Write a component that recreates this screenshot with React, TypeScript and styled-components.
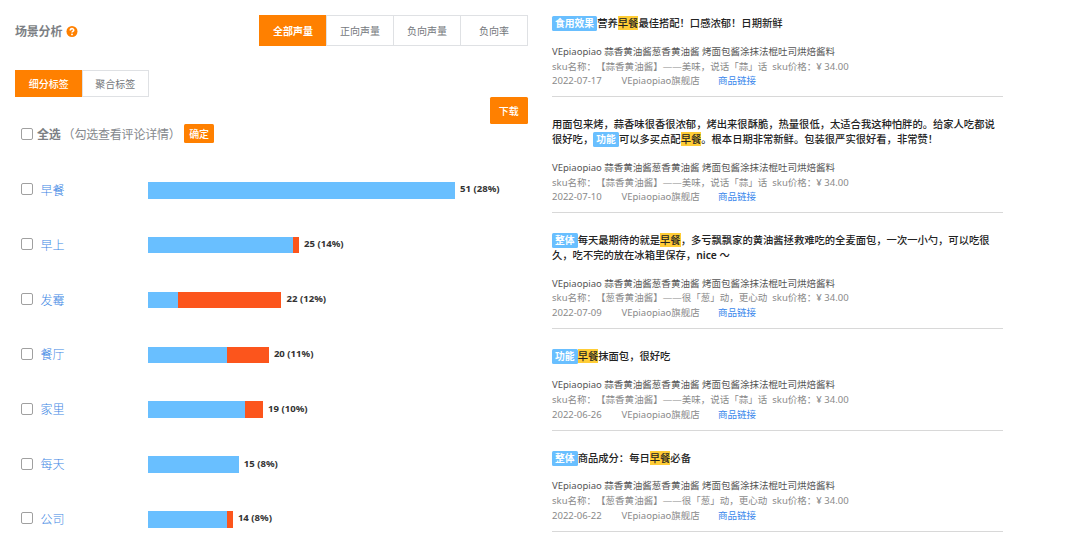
import React from 'react';
import styled, { createGlobalStyle } from 'styled-components';

const Global = createGlobalStyle`
  * { box-sizing: border-box; }
  body {
    margin: 0;
    background: #fff;
    overflow: hidden;
    font-family: "Noto Sans", "Noto Sans CJK SC", sans-serif;
    text-spacing-trim: space-all;
  }
`;

const Page = styled.main`
  display: flex;
  width: 1080px;
  height: 537px;
  overflow: hidden;
`;

const Analysis = styled.section`
  width: 528px;
  flex: none;
  padding: 15px 0 0 15px;
`;

const TopBar = styled.header`
  display: flex;
  justify-content: space-between;
  align-items: center;
  height: 31px;
`;

const Title = styled.h1`
  display: flex;
  align-items: center;
  gap: 4px;
  margin: 2px 0 0;
  font-size: 12px;
  line-height: 16px;
  letter-spacing: -0.2px;
  font-weight: 700;
  color: #7c7f84;
`;

const Group = styled.div`
  display: flex;
`;

const Tab = styled.button<{ $active?: boolean; $h: number }>`
  width: ${p => (p.$h > 28 ? 68 : 67.5)}px;
  height: ${p => p.$h}px;
  margin: 0 0 0 -1px;
  padding: 0;
  border: 1px solid ${p => (p.$active ? '#ff8000' : '#dfe1e4')};
  background: ${p => (p.$active ? '#ff8000' : '#fff')};
  color: ${p => (p.$active ? '#fff' : '#75787d')};
  font: ${p => (p.$active ? (p.$h > 28 ? 700 : 500) : 400)} 10px/14px "Noto Sans", "Noto Sans CJK SC", sans-serif;
  &:first-child { margin-left: 0; }
`;

const SubBar = styled.div`
  display: flex;
  justify-content: space-between;
  margin-top: 24px;
  height: 54px;
`;

const Button = styled.button<{ $w: number; $h: number }>`
  width: ${p => p.$w}px;
  height: ${p => p.$h}px;
  padding: 0;
  border: 0;
  border-radius: 1.5px;
  background: #ff8000;
  color: #fff;
  font: 500 10px/14px "Noto Sans", "Noto Sans CJK SC", sans-serif;
`;

const Download = styled(Button)`
  align-self: flex-end;
`;

const SelectAll = styled.div`
  display: flex;
  align-items: center;
  height: 19px;
  padding-left: 6px;
  font-size: 12px;
  letter-spacing: -0.2px;
  color: #85888d;
`;

const Strong = styled.span`
  margin-left: 4px;
  font-weight: 700;
  color: #7c7f84;
`;

const Hint = styled.span`
  margin: 0 3.5px 0 2px;
  letter-spacing: -0.2px;
`;

const Check = styled.input`
  appearance: none;
  flex: none;
  width: 12px;
  height: 12px;
  margin: 0;
  border: 1px solid #a0a0a0;
  border-radius: 2px;
  background: #fff;
`;

const Rows = styled.div`
  display: flex;
  flex-direction: column;
  margin-top: 19.9px;
`;

const Row = styled.div`
  display: flex;
  align-items: center;
  height: 54.85px;
  padding-left: 6px;

  ${Check} {
    margin-bottom: 2px;
  }
`;

const RowLabel = styled.a`
  width: 107px;
  margin-left: 7.5px;
  padding-top: 1px;
  font-size: 12px;
  line-height: 16px;
  font-weight: 300;
  color: #3c86e4;
`;

const Bar = styled.div<{ $w: number; $neg?: boolean }>`
  flex: none;
  width: ${p => p.$w}px;
  height: 16.5px;
  background: ${p => (p.$neg ? '#fc551c' : '#69bfff')};
`;

const Value = styled.span`
  margin: -2px 0 0 5px;
  font: 700 9.6px/14px "Noto Sans", sans-serif;
  color: #333;
`;

const Reviews = styled.section`
  width: 451px;
  margin-left: 24px;
  flex: none;
`;

const Review = styled.article`
  padding: 20.2px 0 6.9px;
  border-bottom: 1px solid #d8d8d8;
  white-space: nowrap;
  &:first-child { padding-top: 16px; }
`;

const Line = styled.div`
  height: 14.5px;
  line-height: 14.5px;
  font-size: 10.3px;
  font-weight: 500;
  color: #222;
`;

const Latin = styled.span`
  font-weight: 600;
`;

const Tag = styled.span`
  display: inline-block;
  height: 15px;
  padding: 0 3.1px;
  border-radius: 1.5px;
  background: #69bfff;
  color: #fff;
  font-size: 9.75px;
  font-weight: 700;
  line-height: 15px;
  vertical-align: top;
`;

const Mark = styled.mark`
  display: inline-block;
  height: 14px;
  line-height: 14px;
  background: #ffcd36;
  color: #222;
  vertical-align: top;
`;

const Meta = styled.div`
  margin-top: 14.2px;
  font-size: 9.52px;
  line-height: 14.9px;
  color: #8a8a8a;
`;

const Product = styled.div`
  height: 14.9px;
  color: #555;
`;

const Sku = styled.div`
  height: 14.9px;
  white-space: pre;
`;

const Info = styled.div`
  display: flex;
  height: 14.9px;
`;

const DateCell = styled.span`
  width: 69.5px;
`;

const Shop = styled.span`
  width: 96.5px;
`;

const Link = styled.a`
  color: #3a87ec;
`;

const rows = [
  { name: '早餐', pos: 307.5, neg: 0, text: '51 (28%)' },
  { name: '早上', pos: 145.5, neg: 6, text: '25 (14%)' },
  { name: '发霉', pos: 30.2, neg: 103.8, text: '22 (12%)' },
  { name: '餐厅', pos: 79.7, neg: 41.7, text: '20 (11%)' },
  { name: '家里', pos: 97, neg: 18.5, text: '19 (10%)' },
  { name: '每天', pos: 91.2, neg: 0, text: '15 (8%)' },
  { name: '公司', pos: 79.7, neg: 5.7, text: '14 (8%)' },
];

const garlic = '【蒜香黄油酱】——美味，说话「蒜」话';
const onion = '【葱香黄油酱】——很「葱」动，更心动';

const reviews = [
  {
    lines: [<><Tag>食用效果</Tag>营养<Mark>早餐</Mark>最佳搭配！口感浓郁！日期新鲜</>],
    sku: garlic,
    date: '2022-07-17',
  },
  {
    lines: [
      <>用面包来烤，蒜香味很香很浓郁，烤出来很酥脆，热量很低，太适合我这种怕胖的。给家人吃都说</>,
      <>很好吃，<Tag>功能</Tag>可以多买点配<Mark>早餐</Mark>。根本日期非常新鲜。包装很严实很好看，非常赞！</>,
    ],
    sku: garlic,
    date: '2022-07-10',
  },
  {
    lines: [
      <><Tag>整体</Tag>每天最期待的就是<Mark>早餐</Mark>，多亏飘飘家的黄油酱拯救难吃的全麦面包，一次一小勺，可以吃很</>,
      <>久，吃不完的放在冰箱里保存，<Latin>nice</Latin> ～</>,
    ],
    sku: onion,
    date: '2022-07-09',
  },
  {
    lines: [<><Tag>功能</Tag><Mark>早餐</Mark>抹面包，很好吃</>],
    sku: garlic,
    date: '2022-06-26',
  },
  {
    lines: [<><Tag>整体</Tag>商品成分：每日<Mark>早餐</Mark>必备</>],
    sku: onion,
    date: '2022-06-22',
  },
];

const HelpIcon = () => (
  <svg width="12" height="12" viewBox="0 0 12 12">
    <circle cx="6" cy="5.5" r="5.5" fill="#ff8000" />
    <path d="M4.3 4.4C4.3 2 7.7 2.1 7.7 4.2C7.7 5.4 6 5.4 6 6.6" fill="none" stroke="#fff" strokeWidth="1.6" />
    <circle cx="6" cy="8.4" r=".95" fill="#fff" />
  </svg>
);

export default function App() {
  return (
    <Page>
      <Global />
      <Analysis>
        <TopBar>
          <Title>场景分析<HelpIcon /></Title>
          <Group>
            <Tab $h={31} $active>全部声量</Tab>
            <Tab $h={31}>正向声量</Tab>
            <Tab $h={31}>负向声量</Tab>
            <Tab $h={31}>负向率</Tab>
          </Group>
        </TopBar>
        <SubBar>
          <Group>
            <Tab $h={27} $active>细分标签</Tab>
            <Tab $h={27}>聚合标签</Tab>
          </Group>
          <Download $w={38.5} $h={27}>下载</Download>
        </SubBar>
        <SelectAll>
          <Check type="checkbox" />
          <Strong>全选</Strong>
          <Hint>（勾选查看评论详情）</Hint>
          <Button $w={30} $h={19.5}>确定</Button>
        </SelectAll>
        <Rows>
          {rows.map(r => (
            <Row key={r.name}>
              <Check type="checkbox" />
              <RowLabel>{r.name}</RowLabel>
              <Bar $w={r.pos} />
              {r.neg > 0 && <Bar $w={r.neg} $neg />}
              <Value>{r.text}</Value>
            </Row>
          ))}
        </Rows>
      </Analysis>
      <Reviews>
        {reviews.map(r => (
          <Review key={r.date}>
            {r.lines.map((l, i) => <Line key={i}>{l}</Line>)}
            <Meta>
              <Product>VEpiaopiao 蒜香黄油酱葱香黄油酱 烤面包酱涂抹法棍吐司烘焙酱料</Product>
              <Sku>{`sku名称：${r.sku}  sku价格：¥ 34.00`}</Sku>
              <Info>
                <DateCell>{r.date}</DateCell>
                <Shop>VEpiaopiao旗舰店</Shop>
                <Link>商品链接</Link>
              </Info>
            </Meta>
          </Review>
        ))}
      </Reviews>
    </Page>
  );
}
